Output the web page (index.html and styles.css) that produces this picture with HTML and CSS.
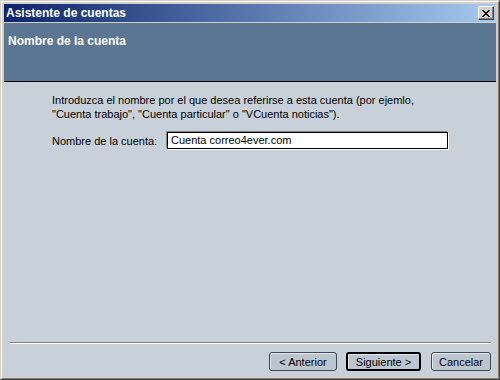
FILE: index.html
```html
<!DOCTYPE html>
<html lang="es">
<head>
    <meta charset="UTF-8">
    <title>Asistente de cuentas</title>
    <link rel="stylesheet" href="styles.css">
</head>
<body>
    <div class="window">
        <div class="frame">
            <div class="titlebar">
                <span class="title">Asistente de cuentas</span>
                <button class="close">
                    <svg width="8" height="7" viewBox="0 0 8 7">
                        <path d="M0 0h2v1h1v1h2V1h1V0h2v1H7v1H6v1H5v1h1v1h1v1h1v1H6V6H5V5H3v1H2v1H0V6h1V5h1V4h1V3H2V2H1V1H0z" fill="#000"/>
                    </svg>
                </button>
            </div>
            <div class="banner">
                <h1>Nombre de la cuenta</h1>
            </div>
            <div class="page">
                <div class="content">
                    <p class="intro">Introduzca el nombre por el que desea referirse a esta cuenta (por ejemlo,<br>"Cuenta trabajo", "Cuenta particular" o "VCuenta noticias").</p>
                    <div class="field">
                        <label>Nombre de la cuenta:</label>
                        <div class="input">Cuenta correo4ever.com</div>
                    </div>
                </div>
                <div class="separator"></div>
                <div class="buttons">
                    <button class="btn prev">&lt; Anterior</button>
                    <button class="btn next default">Siguiente &gt;</button>
                    <button class="btn cancel">Cancelar</button>
                </div>
            </div>
        </div>
    </div>
</body>
</html>
```

FILE: styles.css
```css
body {
    margin: 0;
    font-family: "Liberation Sans", Arial, sans-serif;
    font-size: 11px;
    color: #000;
}
.window {
    width: 500px;
    height: 380px;
    box-sizing: border-box;
    border: 1px solid;
    border-color: #d4d0c8 #404040 #404040 #d4d0c8;
}
.frame {
    height: 100%;
    box-sizing: border-box;
    border: 1px solid;
    border-color: #fff #808080 #808080 #fff;
    padding: 2px;
    background-color: #d4d0c8;
    display: flex;
    flex-direction: column;
}
.titlebar {
    height: 18px;
    margin-bottom: 1px;
    padding: 0 2px 0 2px;
    background: linear-gradient(to right, #0a246a, #a6caf0);
    display: flex;
    align-items: center;
    justify-content: space-between;
}
.title {
    color: #fff;
    font-weight: bold;
    font-size: 12px;
}
.close {
    width: 16px;
    height: 14px;
    padding: 0;
    background-color: #d4d0c8;
    border: 1px solid;
    border-color: #fff #404040 #404040 #fff;
    box-shadow: inset -1px -1px 0 #808080;
    display: flex;
    align-items: center;
    justify-content: center;
}
.banner {
    height: 59px;
    background-color: #5b7692;
    border-bottom: 1px solid #000;
    padding: 12px 4px 0;
    box-sizing: border-box;
}
.banner h1 {
    margin: 0;
    color: #fff;
    font-size: 12px;
    line-height: 13px;
    font-weight: bold;
}
.page {
    flex: 1;
    background-color: #c8d0d9;
    display: flex;
    flex-direction: column;
}
.content {
    flex: 1;
    padding: 11px 0 0 48px;
}
.intro {
    margin: 0;
    line-height: 14px;
}
.field {
    margin-top: 11px;
    display: flex;
    align-items: center;
}
.field label {
    width: 115px;
}
.input {
    width: 273px;
    height: 15px;
    line-height: 15px;
    padding: 0 3px;
    background-color: #fff;
    border: 1px solid #000;
    box-shadow: -1px -1px 0 #808080, 1px 1px 0 #fff;
}
.separator {
    margin: 0 5px 0 6px;
    border-top: 1px solid #808080;
    border-bottom: 1px solid #fff;
}
.buttons {
    display: flex;
    justify-content: flex-end;
    gap: 9px;
    padding: 8px 5px 5px 0;
}
.btn {
    height: 19px;
    padding: 0;
    font-family: "Liberation Sans", Arial, sans-serif;
    font-size: 11px;
    color: #000;
    background-color: #bcc6d1;
    border: 1px solid #404850;
    border-radius: 3px;
    box-shadow: inset 1px 1px 0 #e4e9ee;
}
.btn.default {
    border: 2px solid #000;
}
.prev {
    width: 68px;
}
.next {
    width: 75px;
}
.cancel {
    width: 60px;
    margin-left: 1px;
}
```
